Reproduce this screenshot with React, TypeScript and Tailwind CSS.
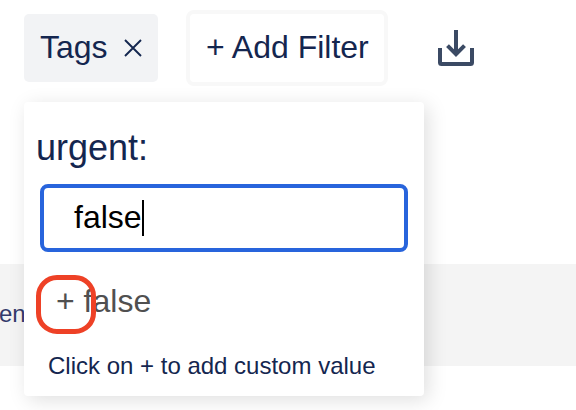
function DownloadIcon() {
  return (
    <svg width="36" height="36" viewBox="0 0 36 36" fill="none" stroke="#3b4a64" strokeWidth="4">
      <path d="M18 0V24" />
      <path d="M9.5 15.6L18 24.1L26.5 15.6" />
      <path d="M2 18V32.5Q2 34 3.5 34H32.5Q34 34 34 32.5V18" />
    </svg>
  );
}

function Toolbar() {
  return (
    <div className="flex h-24 items-start pt-[10px] pl-6 text-[32px] leading-[36px] text-[#14264f]">
      <div className="mt-1 flex h-[68px] w-[134px] items-center rounded-[5px] bg-[#f2f3f5] pl-4">
        <span className="w-[84px] pb-[2px]">Tags</span>
        <svg width="18" height="18" viewBox="0 0 18 18" fill="none" stroke="currentColor" strokeWidth="1.9">
          <path d="M1 1L17 17M17 1L1 17" />
        </svg>
      </div>
      <button className="ml-7 flex h-[76px] w-[202px] items-center rounded-[8px] border-4 border-[#f8f8f8] pb-[2px] pl-4 whitespace-pre">
        + Add Filter
      </button>
      <div className="ml-[50px] pt-5">
        <DownloadIcon />
      </div>
    </div>
  );
}

function TagPanel() {
  return (
    <div className="absolute top-[102px] left-6 flex h-[294px] w-[400px] flex-col rounded-[4px] bg-white shadow-[4px_4px_20px_rgba(0,0,0,0.13)]">
      <div className="mt-[26px] ml-3 h-[40px] text-[36px] leading-[40px] text-[#14264f]">urgent:</div>
      <div className="mt-4 ml-4 flex h-[68px] w-[368px] items-center rounded-[8px] border-4 border-[#2864dc] pl-[30px] text-[32px] leading-[36px] text-black">
        <span className="pb-[2px]">false</span>
        <span className="h-9 w-[2px] bg-black" />
      </div>
      <div className="relative mt-[31px] ml-8 h-9 text-[32px] leading-[36px] text-[#505050]">
        + false
        <span className="absolute -top-2 -left-5 h-[59px] w-[60px] rounded-[21px] border-5 border-[#ee4126]" />
      </div>
      <div className="mt-[33px] ml-6 text-[24px] leading-[28px] whitespace-nowrap text-[#14264f]">
        Click on + to add custom value
      </div>
    </div>
  );
}

export default function App() {
  return (
    <main
      className="relative h-[410px] w-[576px] overflow-hidden bg-white"
      style={{ fontFamily: '"Liberation Sans", Arial, sans-serif' }}
    >
      <Toolbar />
      <div className="mt-[168px] flex h-[102px] items-center bg-[#f4f4f4] pb-[2px] text-[24px] leading-[28px] text-[#333a6b]">
        <span className="-ml-px">en</span>
      </div>
      <TagPanel />
    </main>
  );
}
